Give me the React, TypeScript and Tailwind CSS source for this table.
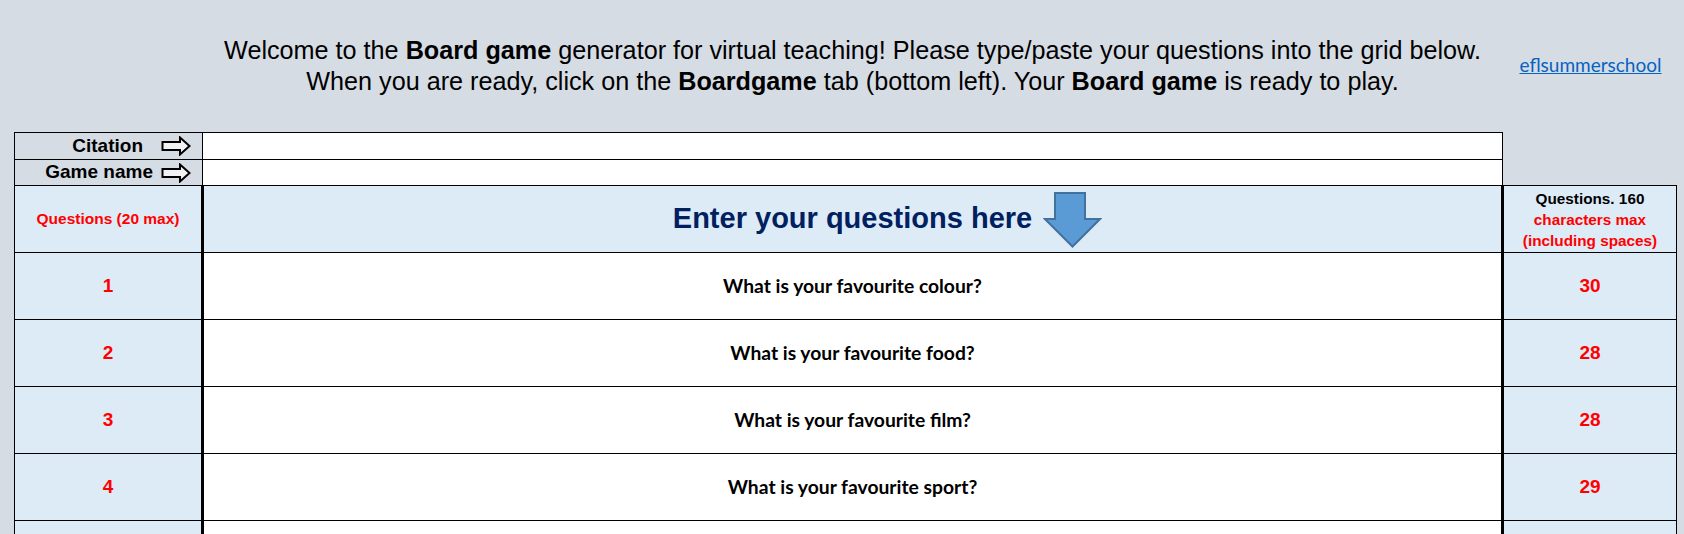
import React from "react";

const questions = [
  { n: "1", text: "What is your favourite colour?", count: "30" },
  { n: "2", text: "What is your favourite food?", count: "28" },
  { n: "3", text: "What is your favourite film?", count: "28" },
  { n: "4", text: "What is your favourite sport?", count: "29" },
  { n: "", text: "", count: "" },
];

function RightArrow() {
  return (
    <svg width="30" height="20" viewBox="0 0 30 20" className="shrink-0">
      <polygon
        points="1.5,6 19,6 19,1.5 28.5,10 19,18.5 19,14 1.5,14"
        fill="#f2f2f2"
        stroke="#000"
        strokeWidth="2"
        strokeLinejoin="miter"
      />
    </svg>
  );
}

export default function App() {
  return (
    <div className="w-[1684px] h-[534px] overflow-hidden bg-[#D6DCE4] pl-[14px] font-['Liberation_Sans',Arial,sans-serif] text-black">
      {/* intro text + link */}
      <div className="flex h-[132px]">
        <div className="w-[190px] shrink-0" />
        <div className="w-[1300px] shrink-0 whitespace-nowrap pr-[3px] pt-[35px] text-center text-[25.2px] leading-[31px]">
          <p>
            Welcome to the <b>Board game</b> generator for virtual teaching! Please type/paste your questions into the grid below.
          </p>
          <p>
            When you are ready, click on the <b>Boardgame</b> tab (bottom left). Your <b>Board game</b> is ready to play.
          </p>
        </div>
        <div className="w-[173px] shrink-0 pt-[53px] text-center">
          <a
            href="#"
            className="font-['Lato',sans-serif] text-[19px] leading-[23px] text-[#0563C1] underline"
          >
            eflsummerschool
          </a>
        </div>
      </div>

      {/* citation row */}
      <div className="flex h-[28px] w-[1489px] border-y border-black">
        <div className="flex w-[189px] shrink-0 items-center justify-end border-x border-black pr-[11px] text-[19px] font-bold">
          <span className="mr-[18px]">Citation</span>
          <RightArrow />
        </div>
        <div className="w-[1300px] shrink-0 border-r border-black bg-white" />
      </div>

      {/* game name row */}
      <div className="flex h-[26px] w-[1663px] border-b border-black">
        <div className="flex w-[189px] shrink-0 items-center justify-end border-x border-black pr-[11px] text-[19px] font-bold">
          <span className="mr-[8px] whitespace-nowrap">Game name</span>
          <RightArrow />
        </div>
        <div className="w-[1300px] shrink-0 border-r border-black bg-white" />
      </div>

      {/* header row */}
      <div className="flex h-[67px] w-[1663px] border-b border-black">
        <div className="flex w-[190px] shrink-0 items-center justify-center border-l border-r-[3px] border-black bg-[#DDEBF7] text-[15.5px] font-bold text-[#FF0000]">
          Questions (20 max)
        </div>
        <div className="flex w-[1300px] shrink-0 items-center justify-center border-r-[3px] border-black bg-[#DDEBF7]">
          <span className="relative text-[29px] font-bold text-[#002060]">
            Enter your questions here
            <svg
              width="59"
              height="56"
              viewBox="0 0 59 56"
              className="absolute left-full top-[-5px] ml-[11px]"
            >
              <polygon
                points="12,1 42,1 42,27 57,27 29.5,54.5 2,27 12,27"
                fill="#5B9BD5"
                stroke="#41719C"
                strokeWidth="2"
              />
            </svg>
          </span>
        </div>
        <div className="flex w-[173px] shrink-0 flex-col items-center justify-center border-r border-black bg-[#DDEBF7] text-center text-[15.3px] font-bold leading-[21px]">
          <span>Questions. 160</span>
          <span className="text-[#FF0000]">characters max</span>
          <span className="text-[#FF0000]">(including spaces)</span>
        </div>
      </div>

      {/* question rows */}
      {questions.map((q, i) => (
        <div key={i} className="flex h-[67px] w-[1663px] border-b border-black">
          <div className="flex w-[190px] shrink-0 items-center justify-center border-l border-r-[3px] border-black bg-[#DDEBF7] text-[19px] font-bold text-[#FF0000]">
            {q.n}
          </div>
          <div className="flex w-[1300px] shrink-0 items-center justify-center border-r-[3px] border-black bg-white font-['Lato',sans-serif] text-[19.3px] font-bold">
            {q.text}
          </div>
          <div className="flex w-[173px] shrink-0 items-center justify-center border-r border-black bg-[#DDEBF7] text-[19px] font-bold text-[#FF0000]">
            {q.count}
          </div>
        </div>
      ))}
    </div>
  );
}
